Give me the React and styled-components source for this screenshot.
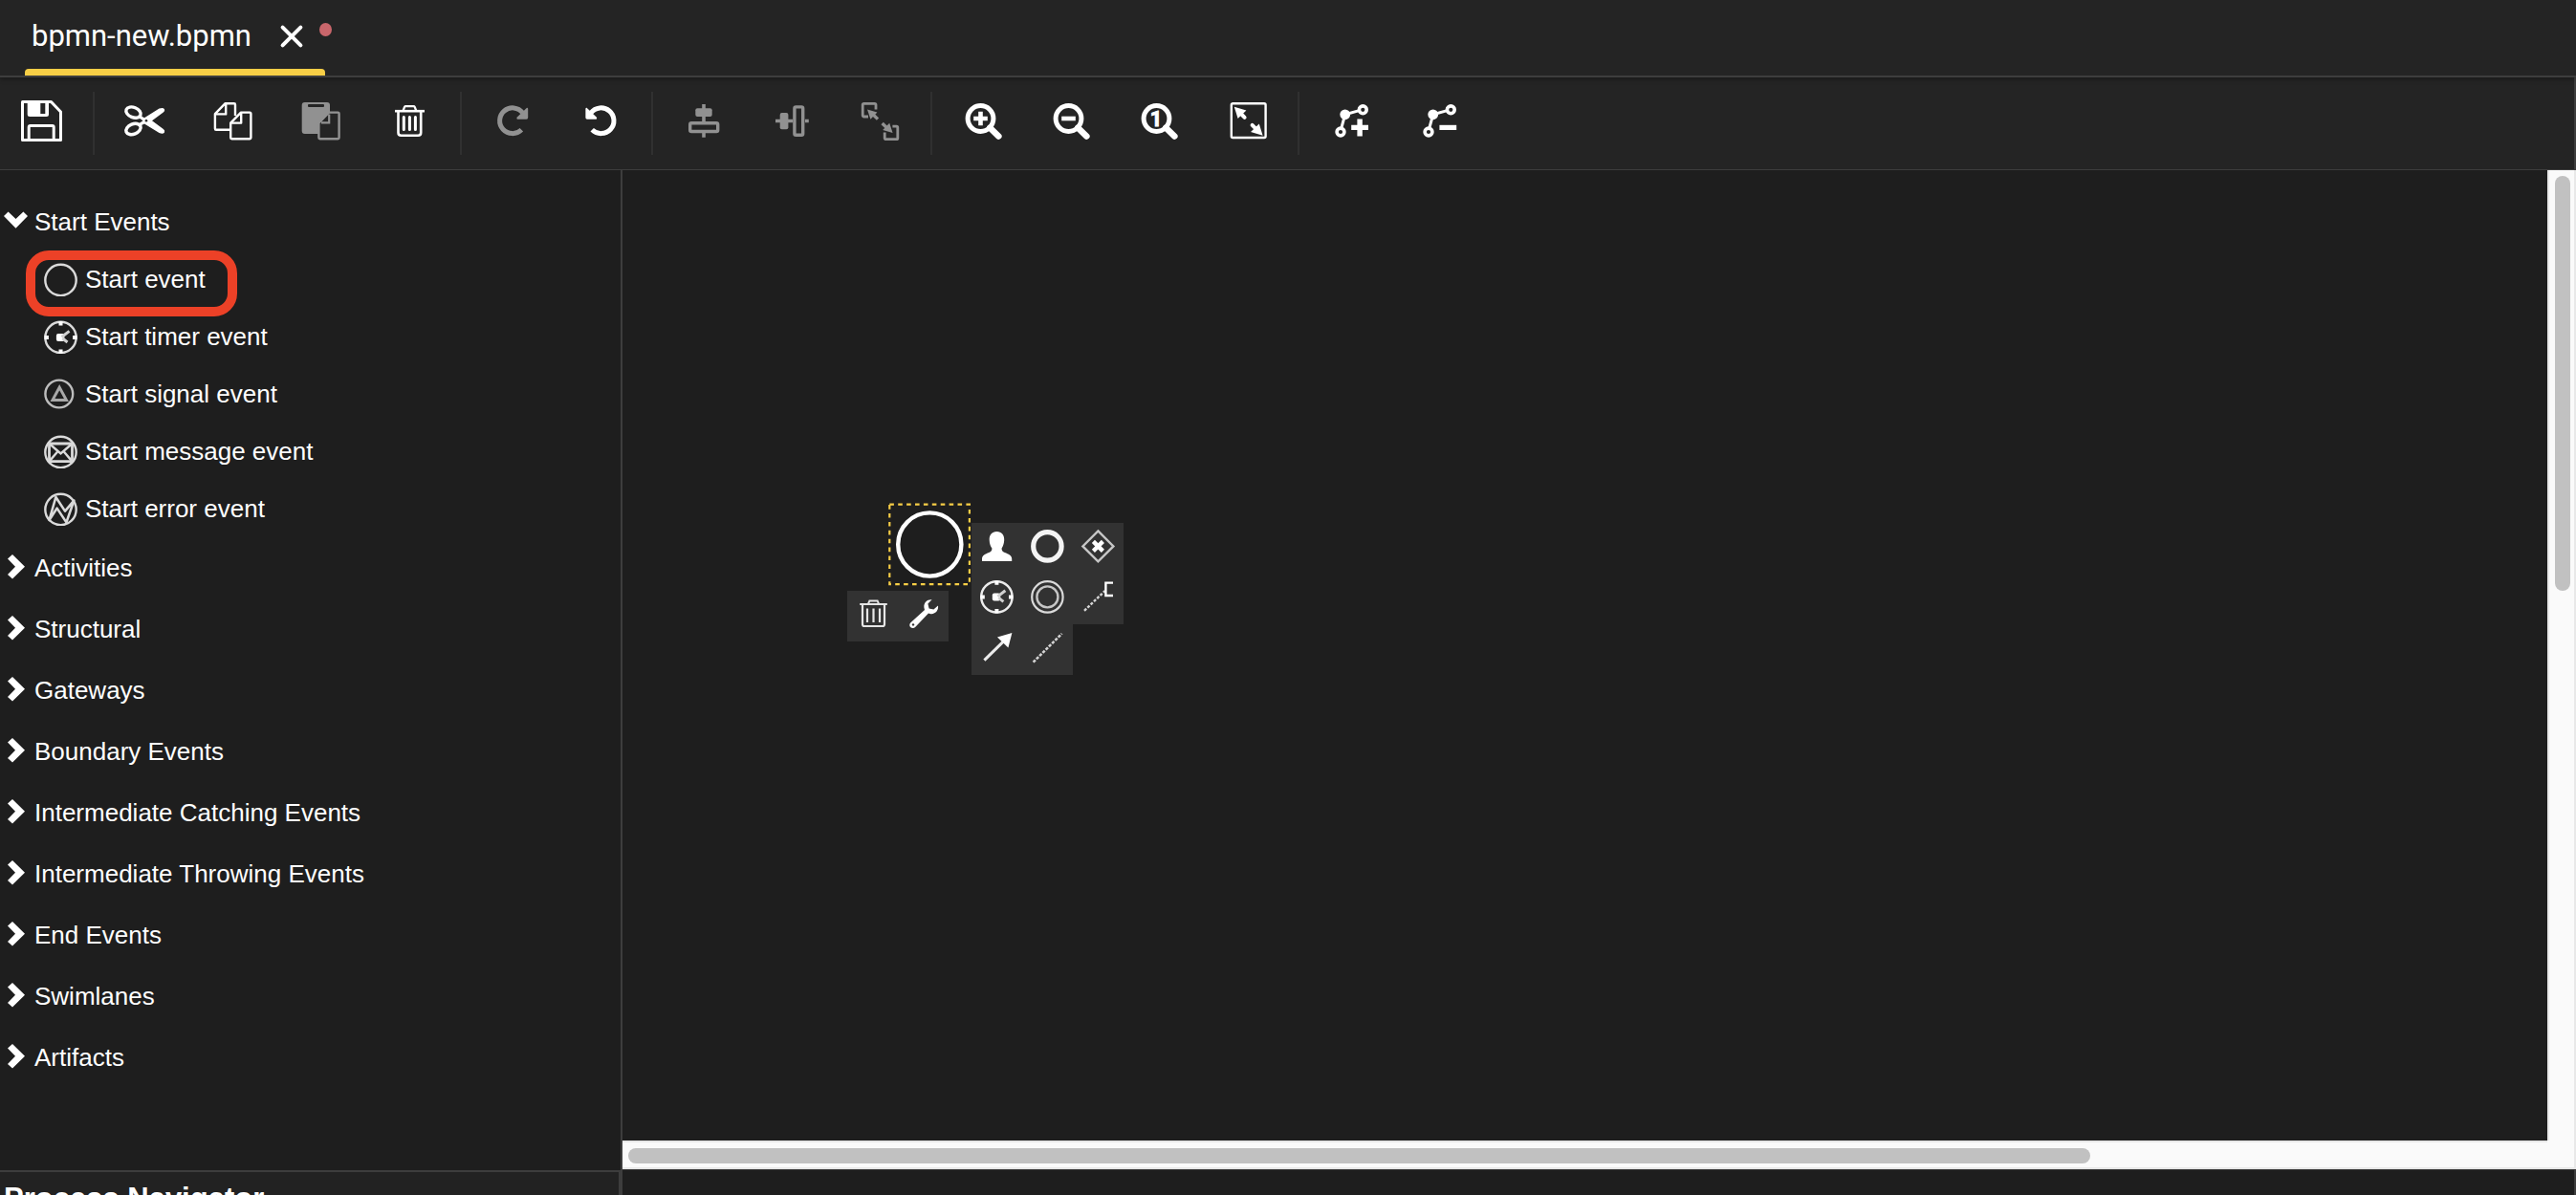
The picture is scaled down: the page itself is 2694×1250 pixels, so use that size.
import React, { useState } from "react";
import styled, { createGlobalStyle, css } from "styled-components";

const color = {
  bar: "#242424",
  surface: "#1e1e1e",
  line: "#3d3d3d",
  separator: "#303030",
  popup: "#323232",
  text: "#ffffff",
  disabled: "#919191",
  accent: "#f7ce46",
  dirty: "#c9666b",
  highlight: "#ec4127",
  track: "#fafafa",
  trackEdge: "#e8e8e8",
  thumb: "#c1c1c1",
};

const GlobalStyle = createGlobalStyle`
  *, *::before, *::after { box-sizing: border-box; }
  body {
    margin: 0;
    background: ${color.surface};
    color: ${color.text};
    font-family: "Liberation Sans", Arial, sans-serif;
    font-size: 26px;
    line-height: 30px;
  }
`;

const plainButton = css`
  border: 0;
  padding: 0;
  margin: 0;
  background: none;
  color: inherit;
  font: inherit;
  text-align: left;
  cursor: pointer;
`;

const Editor = styled.div`
  display: flex;
  flex-direction: column;
  height: 100vh;
  overflow: hidden;
`;

/* ---------- file tabs ---------- */

const TabBar = styled.header`
  position: relative;
  z-index: 1;
  display: flex;
  flex: 0 0 79px;
  padding-left: 26px;
  background: ${color.bar};
  border-bottom: 2px solid ${color.line};
  box-shadow: 0 2px 5px rgba(0, 0, 0, 0.3);
`;

const FileTab = styled.div`
  position: relative;
  display: flex;
  align-items: center;
  gap: 28px;
  height: 79px;
  padding: 0 21px 4px 7px;
  font-family: Roboto, sans-serif;
  font-size: 31px;
  line-height: 36px;

  &::after {
    content: "";
    position: absolute;
    left: 0;
    right: 0;
    bottom: 0;
    height: 7px;
    border-radius: 4px 4px 0 0;
    background: ${color.accent};
  }
`;

const CloseButton = styled.button`
  ${plainButton}
  display: flex;
`;

const DirtyDot = styled.span`
  position: absolute;
  top: 24px;
  right: -7px;
  width: 13px;
  height: 14px;
  border-radius: 50%;
  background: ${color.dirty};
`;

/* ---------- toolbar ---------- */

const Toolbar = styled.div`
  display: flex;
  align-items: center;
  flex: 0 0 97px;
  background: ${color.bar};
  border-bottom: 1px solid ${color.line};
  border-right: 2px solid ${color.line};
`;

const ToolGroup = styled.div`
  display: flex;
  align-items: center;
  height: 66px;
  padding: ${(p) => (p.$first ? "0 11px 0 0" : "0 7px")};

  & + & {
    border-left: 2px solid ${color.separator};
  }
`;

const ToolButton = styled.button`
  ${plainButton}
  display: flex;
  justify-content: center;
  width: ${(p) => (p.$narrow ? "86px" : "92px")};
  color: ${color.text};

  &:disabled {
    color: ${color.disabled};
    cursor: default;
  }
`;

/* ---------- body ---------- */

const Body = styled.div`
  display: flex;
  flex: 1;
  min-height: 0;
`;

const Sidebar = styled.aside`
  display: flex;
  flex-direction: column;
  flex: 0 0 651px;
  border-right: 2px solid ${color.line};
`;

const Palette = styled.nav`
  flex: 1;
  min-height: 0;
  padding-top: 23px;
`;

const GroupHeader = styled.button`
  ${plainButton}
  display: flex;
  align-items: center;
  width: 100%;
  height: ${(p) => (p.$open ? "61px" : "64px")};
`;

const Chevron = styled.svg`
  flex: none;
  width: 36px;
  height: 30px;
`;

const ItemList = styled.ul`
  margin: 0;
  padding: 0 0 0 45px;
  list-style: none;
`;

const Item = styled.li`
  position: relative;
  display: flex;
  height: 60px;
`;

const ItemButton = styled.button`
  ${plainButton}
  display: flex;
  align-items: center;
  gap: 8px;
`;

const Highlight = styled.span`
  position: absolute;
  left: -18px;
  top: 0;
  width: 221px;
  height: 69px;
  border: 10px solid ${color.highlight};
  border-radius: 24px;
  pointer-events: none;
`;

const Navigator = styled.section`
  flex: 0 0 26px;
  overflow: hidden;
  padding: 10px 4px 0;
  background: #222222;
  border-top: 2px solid ${color.line};
  border-right: 2px solid ${color.line};
`;

const NavigatorTitle = styled.h2`
  margin: 0;
  font-size: 31px;
  line-height: 36px;
  font-weight: 700;
`;

/* ---------- canvas ---------- */

const CanvasColumn = styled.main`
  display: flex;
  flex-direction: column;
  flex: 1;
  min-width: 0;
`;

const CanvasArea = styled.div`
  display: grid;
  grid-template-columns: 1fr 30px;
  grid-template-rows: 1fr 30px;
  flex: 1;
  background: ${color.track};
`;

const Canvas = styled.div`
  position: relative;
  overflow: hidden;
  background: ${color.surface};
`;

const VerticalTrack = styled.div`
  padding: 6px 4px 0 6px;
  background: ${color.track};
  border-left: 2px solid ${color.trackEdge};
  border-right: 2px solid ${color.trackEdge};
`;

const HorizontalTrack = styled.div`
  padding: 6px 0 0 6px;
  background: ${color.track};
  border-top: 2px solid ${color.trackEdge};
  border-bottom: 2px solid ${color.trackEdge};
`;

const Corner = styled.div`
  border-right: 2px solid ${color.trackEdge};
  border-bottom: 2px solid ${color.trackEdge};
`;

const Thumb = styled.div`
  width: ${(p) => (p.$vertical ? "16px" : "76.2%")};
  height: ${(p) => (p.$vertical ? "43%" : "16px")};
  border-radius: 8px;
  background: ${color.thumb};
`;

const StatusStrip = styled.footer`
  flex: 0 0 27px;
  border-top: 1px solid ${color.line};
  border-right: 2px solid ${color.line};
`;

const Shape = styled.svg`
  position: absolute;
  left: ${(p) => p.$x}px;
  top: ${(p) => p.$y}px;
`;

const ContextPad = styled.div`
  position: absolute;
  left: ${(p) => p.$x}px;
  top: ${(p) => p.$y}px;
`;

const PadRow = styled.div`
  display: flex;
`;

const PadButton = styled.button`
  ${plainButton}
  display: flex;
  width: 53px;
  height: 53px;
  background: ${color.popup};
`;

/* ---------- drawings ---------- */

const ToolIcon = ({ children }) => (
  <svg width="48" height="48" viewBox="0 0 48 48" fill="none" stroke="currentColor" aria-hidden="true">
    {children}
  </svg>
);

const solid = { fill: "currentColor", stroke: "none" };

const SaveIcon = () => (
  <ToolIcon>
    <path d="M4.5 1.5H34.5L44.5 12V41.5H4.5Z" strokeWidth="3" strokeLinejoin="round" />
    <path d="M9.7 1H32V14.5Q32 17 29.5 17H12.2Q9.7 17 9.7 14.5Z M23.3 3V14H28.3V3Z" fillRule="evenodd" {...solid} />
    <path d="M11.2 41V28Q11.2 26.5 12.7 26.5H35.7Q37.2 26.5 37.2 28V41" strokeWidth="3" />
  </ToolIcon>
);

const ScissorsIcon = () => (
  <ToolIcon>
    <ellipse cx="11.5" cy="12.6" rx="8" ry="5.2" transform="rotate(22 11.5 12.6)" strokeWidth="3.4" />
    <ellipse cx="11.5" cy="30" rx="8" ry="5.2" transform="rotate(-22 11.5 30)" strokeWidth="3.4" />
    <path d="M17 15L23 18.2L38.5 8.6Q42.5 7 44 9.2Q44.8 11.2 42.8 12.6L31 21.3L42.8 30Q44.8 31.4 44 33.4Q42.5 35.6 38.5 34L23 24.4L17 27.6L16 25L21.5 21.3L16 17.6Z" {...solid} />
    <circle cx="25" cy="21.3" r="1.3" fill={color.bar} stroke="none" />
  </ToolIcon>
);

const CopyIcon = () => (
  <ToolIcon>
    <g strokeWidth="2.4" strokeLinejoin="round">
      <path d="M21 30.8H6Q4.9 30.8 4.9 29.5V14.2L15.6 3.2H24.8Q26 3.2 26 4.4V16" />
      <path d="M5.5 14.4H16.2V3.6" />
      <path d="M32 12.6H41.2Q42.4 12.6 42.4 13.8V39Q42.4 40.2 41.2 40.2H22.4Q21.2 40.2 21.2 39V23.6Z" />
      <path d="M21.8 23.6H32.2V13" />
    </g>
  </ToolIcon>
);

const PasteIcon = () => (
  <ToolIcon>
    <rect x="3.7" y="2" width="29.3" height="33" rx="3" {...solid} />
    <rect x="10" y="4" width="17" height="3" rx="1" fill={color.bar} stroke="none" />
    <path
      d="M32 12.6H41.4Q42.6 12.6 42.6 13.8V39Q42.6 40.2 41.4 40.2H22.6Q21.4 40.2 21.4 39V23.6Z"
      fill={color.bar}
      strokeWidth="2.4"
      strokeLinejoin="round"
    />
    <path d="M24 23.4H32.2V14.5" strokeWidth="2.2" />
  </ToolIcon>
);

const TrashIcon = () => (
  <ToolIcon>
    <path d="M9 11.2H40" strokeWidth="2.6" />
    <path d="M17.5 11L19 7Q19.4 6.2 20.4 6.2H28.4Q29.4 6.2 29.8 7L31.3 11" strokeWidth="2.2" />
    <path d="M12.5 12V33.8Q12.5 36.8 15.5 36.8H33.2Q36.2 36.8 36.2 33.8V12" strokeWidth="2.6" />
    <path d="M18.3 17.5V30.5M24.4 17.5V30.5M30.4 17.5V30.5" strokeWidth="3" strokeLinecap="round" />
  </ToolIcon>
);

const TurnArrow = () => (
  <>
    <path d="M33.4 30.8A13.4 13.4 0 1 1 34.6 13" strokeWidth="5" />
    <path d="M39 7.7Q40.2 7.5 40.2 9V18Q40.2 19.8 38.6 19.8H29.2Q28 19.6 28.6 17.8Z" {...solid} />
  </>
);

const RedoIcon = () => (
  <ToolIcon>
    <TurnArrow />
  </ToolIcon>
);

const UndoIcon = () => (
  <ToolIcon>
    <g transform="translate(48.6 0) scale(-1 1)">
      <TurnArrow />
    </g>
  </ToolIcon>
);

const AlignVerticalIcon = () => (
  <ToolIcon>
    <path d="M24 4V22M24 34V38.7" strokeWidth="3.6" />
    <rect x="15.3" y="8.3" width="17.4" height="8.7" rx="2" {...solid} />
    <rect x="9.7" y="23.7" width="29" height="8.8" rx="1.5" strokeWidth="3.4" />
  </ToolIcon>
);

const AlignHorizontalIcon = () => (
  <ToolIcon>
    <path d="M7 21.5H25M38 21.5H41.8" strokeWidth="3.6" />
    <rect x="11.7" y="13" width="8.7" height="17.2" rx="2" {...solid} />
    <rect x="26.9" y="6.9" width="8.8" height="29.4" rx="1.5" strokeWidth="3.4" />
  </ToolIcon>
);

const SameSizeIcon = () => (
  <ToolIcon>
    <path d="M20 9.5V4.6Q20 3.4 18.8 3.4H7.4Q6.2 3.4 6.2 4.6V15.6Q6.2 17 7.6 17H12" strokeWidth="2.8" />
    <path d="M22 19.6L16 13.8" strokeWidth="3.4" />
    <path d="M11 9.6L21.4 12.6L14.4 19.8Z" {...solid} />
    <path d="M29.2 33.4V39.2Q29.2 40.6 30.6 40.6H41.6Q42.8 40.6 42.8 39.4V28.4Q42.8 27.2 41.6 27.2H37.4" strokeWidth="2.8" />
    <path d="M26.6 24L32.6 29.8" strokeWidth="3.4" />
    <path d="M37.6 34L27.2 31L34.2 23.8Z" {...solid} />
  </ToolIcon>
);

const Magnifier = ({ children }) => (
  <ToolIcon>
    <circle cx="21.5" cy="19" r="13.4" strokeWidth="5" />
    <path d="M31.2 28.6L40.4 37.6" strokeWidth="6.4" strokeLinecap="round" />
    {children}
  </ToolIcon>
);

const ZoomInIcon = () => (
  <Magnifier>
    <path d="M14.2 19H28.8M21.5 11.7V26.3" strokeWidth="4.6" />
  </Magnifier>
);

const ZoomOutIcon = () => (
  <Magnifier>
    <path d="M14.2 19H28.8" strokeWidth="4.6" />
  </Magnifier>
);

const ZoomText = styled.text`
  font: 700 22px Roboto, sans-serif;
  fill: currentColor;
  stroke: currentColor;
  stroke-width: 1px;
  text-anchor: middle;
`;

const ZoomActualIcon = () => (
  <Magnifier>
    <ZoomText x="21" y="27">1</ZoomText>
  </Magnifier>
);

const ZoomFitIcon = () => (
  <ToolIcon>
    <rect x="7.8" y="3.2" width="35.8" height="35.8" rx="1.5" strokeWidth="2.4" />
    <path d="M16 12L21.6 17.8M35.4 31.6L29.6 25.8" strokeWidth="4" strokeLinecap="round" />
    <path d="M10.8 6.8L23.4 10.6L14.6 19Z M40.6 36.8L28 33L36.8 24.6Z" {...solid} />
  </ToolIcon>
);

const Route = ({ children }) => (
  <ToolIcon>
    <path d="M33.5 10.6L18.7 14.8L14.8 29" strokeWidth="3" />
    <circle cx="18.7" cy="14.8" r="5.4" {...solid} />
    <circle cx="37.3" cy="9.8" r="3.9" strokeWidth="3.6" />
    <circle cx="14" cy="33" r="3.9" strokeWidth="3.6" />
    {children}
  </ToolIcon>
);

const AddBendIcon = () => (
  <Route>
    <path d="M25.2 28.4H43M34.1 19.4V37.4" strokeWidth="5.4" />
  </Route>
);

const RemoveBendIcon = () => (
  <Route>
    <path d="M25.4 28.4H43.2" strokeWidth="5.2" />
  </Route>
);

const EventIcon = ({ children, small }) => (
  <svg width="36" height="36" viewBox="0 0 36 36" fill="none" stroke="#dadada" strokeWidth="2.4" aria-hidden="true">
    {small ? <circle cx="16.8" cy="18" r="14.4" stroke="#bdbdbd" /> : <circle cx="18.5" cy="19" r="16.2" />}
    {children}
  </svg>
);

const TimerMarks = ({ cx, cy }) => (
  <g transform={`translate(${cx} ${cy})`}>
    <path d="M0 -17V-12.6M0 17V12.6M-17 0H-12.6M17 0H12.6" stroke="#fff" strokeWidth="4" />
    <rect x="-4.6" y="-4" width="8.4" height="8" rx="2" fill="#fff" stroke="none" />
    <path d="M1 -0.5L9 -6.6M2 1L7 5" stroke="#d0d0d0" strokeWidth="3" />
  </g>
);

const StartIcon = () => <EventIcon />;
const StartTimerIcon = () => (
  <EventIcon>
    <TimerMarks cx={18.5} cy={19} />
  </EventIcon>
);
const StartSignalIcon = () => (
  <EventIcon small>
    <path d="M17.2 11.2L24.4 24.4H10Z" stroke="#a8a8a8" strokeWidth="3" />
  </EventIcon>
);
const StartMessageIcon = () => (
  <EventIcon>
    <path d="M6.5 10H30.5V28.6H6.5Z" strokeWidth="2.8" />
    <path d="M6.5 10L18.5 20.4L30.5 10M6.5 28.6L15.6 18M30.5 28.6L21.4 18" />
  </EventIcon>
);
const StartErrorIcon = () => (
  <EventIcon>
    <path d="M6.5 30L13.4 6L23 20.6L32.4 9.6L24.4 32.4L14.6 17.6Z" strokeWidth="2.6" strokeLinejoin="round" />
  </EventIcon>
);

const PadIcon = ({ children }) => (
  <svg width="53" height="53" viewBox="0 0 53 53" fill="none" stroke="#ffffff" aria-hidden="true">
    {children}
  </svg>
);

const UserTaskIcon = () => (
  <PadIcon>
    <path
      d="M26.4 9C31.5 9 34.4 12.6 34.2 18C34 22 32.8 24.6 31.6 26.4C31.4 28.6 32.4 30 34.8 31C38.6 32.6 42.2 34 42.2 37.4V40H11V37.4C11 34 14.4 32.6 18.2 31C20.6 30 21.6 28.6 21.4 26.4C20 24.6 18.8 22 18.7 18C18.5 12.6 21.4 9 26.4 9Z"
      fill="#fff"
      stroke="none"
    />
  </PadIcon>
);
const EndEventIcon = () => (
  <PadIcon>
    <circle cx="26.4" cy="24.4" r="14.7" strokeWidth="5.2" stroke="#f4f4f4" />
  </PadIcon>
);
const GatewayIcon = () => (
  <PadIcon>
    <path d="M26.4 8.4L42.4 24.4L26.4 40.4L10.4 24.4Z" stroke="#c6c6c6" strokeWidth="2.4" />
    <path d="M21.4 19.4L31.4 29.4M31.4 19.4L21.4 29.4" strokeWidth="4.4" />
  </PadIcon>
);
const PadTimerIcon = () => (
  <PadIcon>
    <circle cx="26.4" cy="24.4" r="16.2" stroke="#ececec" strokeWidth="2.4" />
    <TimerMarks cx={26.4} cy={24.4} />
  </PadIcon>
);
const IntermediateIcon = () => (
  <PadIcon>
    <circle cx="26.4" cy="24.4" r="16.2" stroke="#dadada" strokeWidth="2.2" />
    <circle cx="26.4" cy="24.4" r="11" stroke="#c6c6c6" strokeWidth="2.4" />
  </PadIcon>
);
const AnnotationIcon = () => (
  <PadIcon>
    <path d="M12 38.8L33.6 18" stroke="#d4d4d4" strokeWidth="2.4" strokeDasharray="3 1.6" />
    <path d="M42 9.6H34.4V23H42" strokeWidth="2.4" />
  </PadIcon>
);
const SequenceFlowIcon = () => (
  <PadIcon>
    <path d="M13.4 37.6L33 18.4" stroke="#ececec" strokeWidth="3" />
    <path d="M42.4 9L27 13.4L38.4 24.4Z" fill="#fff" stroke="none" />
  </PadIcon>
);
const AssociationIcon = () => (
  <PadIcon>
    <path d="M11.6 39.6L41.6 9.8" stroke="#d4d4d4" strokeWidth="2.6" strokeDasharray="3.2 1.4" />
  </PadIcon>
);
const DeleteIcon = () => (
  <PadIcon>
    <g stroke="#e6e6e6">
      <path d="M13.2 14H41.8" strokeWidth="2" />
      <path d="M22 13.6L23.4 10.4H31.6L33 13.6" strokeWidth="2" />
      <path d="M16 15V35Q16 37 18 37H37Q39 37 39 35V15" strokeWidth="2.2" />
      <path d="M21 18.4V33M27.5 18.4V33M34 18.4V33" strokeWidth="2.2" />
    </g>
  </PadIcon>
);
const WrenchIcon = () => (
  <PadIcon>
    <path
      d="M35.6 9.2C31 8.6 26.8 12.2 27.4 17.4L28 20L13.4 33.2C11.8 34.8 12 37 13.4 38.2C14.8 39.4 17 39.2 18.4 37.8L32 23.6L34.4 24.2C39.6 24.6 42.8 20 42 15.6L37.4 19.6L32.6 18.4L31.4 13.6Z"
      fill="#fff"
      stroke="none"
    />
    <circle cx="16" cy="35.4" r="1.2" fill={color.popup} stroke="none" />
  </PadIcon>
);

/* ---------- data ---------- */

const toolGroups = [
  [{ label: "Save", Icon: SaveIcon }],
  [
    { label: "Cut", Icon: ScissorsIcon },
    { label: "Copy", Icon: CopyIcon },
    { label: "Paste", Icon: PasteIcon, disabled: true },
    { label: "Delete", Icon: TrashIcon },
  ],
  [
    { label: "Redo", Icon: RedoIcon, disabled: true },
    { label: "Undo", Icon: UndoIcon },
  ],
  [
    { label: "Align vertical", Icon: AlignVerticalIcon, disabled: true },
    { label: "Align horizontal", Icon: AlignHorizontalIcon, disabled: true },
    { label: "Same size", Icon: SameSizeIcon, disabled: true },
  ],
  [
    { label: "Zoom in", Icon: ZoomInIcon },
    { label: "Zoom out", Icon: ZoomOutIcon },
    { label: "Zoom to actual size", Icon: ZoomActualIcon },
    { label: "Zoom to fit", Icon: ZoomFitIcon },
  ],
  [
    { label: "Add bend point", Icon: AddBendIcon },
    { label: "Remove bend point", Icon: RemoveBendIcon },
  ],
];

const paletteGroups = [
  {
    name: "Start Events",
    items: [
      { name: "Start event", Icon: StartIcon, highlighted: true },
      { name: "Start timer event", Icon: StartTimerIcon },
      { name: "Start signal event", Icon: StartSignalIcon },
      { name: "Start message event", Icon: StartMessageIcon },
      { name: "Start error event", Icon: StartErrorIcon },
    ],
  },
  { name: "Activities", items: [] },
  { name: "Structural", items: [] },
  { name: "Gateways", items: [] },
  { name: "Boundary Events", items: [] },
  { name: "Intermediate Catching Events", items: [] },
  { name: "Intermediate Throwing Events", items: [] },
  { name: "End Events", items: [] },
  { name: "Swimlanes", items: [] },
  { name: "Artifacts", items: [] },
];

const appendRows = [
  [
    ["Append user task", UserTaskIcon],
    ["Append end event", EndEventIcon],
    ["Append gateway", GatewayIcon],
  ],
  [
    ["Append timer event", PadTimerIcon],
    ["Append intermediate event", IntermediateIcon],
    ["Append annotation", AnnotationIcon],
  ],
  [
    ["Sequence flow", SequenceFlowIcon],
    ["Association", AssociationIcon],
  ],
];

const editRows = [
  [
    ["Delete element", DeleteIcon],
    ["Change type", WrenchIcon],
  ],
];

function Pad({ x, y, rows }) {
  return (
    <ContextPad $x={x} $y={y}>
      {rows.map((row, index) => (
        <PadRow key={index}>
          {row.map(([label, Icon]) => (
            <PadButton key={label} type="button" aria-label={label}>
              <Icon />
            </PadButton>
          ))}
        </PadRow>
      ))}
    </ContextPad>
  );
}

function PaletteGroup({ group, open, onToggle }) {
  return (
    <div>
      <GroupHeader type="button" $open={open} aria-expanded={open} onClick={onToggle}>
        <Chevron viewBox="0 0 36 30" fill="#fff" aria-hidden="true">
          {open ? (
            <path d="M4 9L8.6 4.6L16.5 12L24.4 4.6L29 9L16.5 21.8Z" />
          ) : (
            <path d="M8 5.6L13 1L26 13.8L13 26.6L8 22L16 13.8Z" />
          )}
        </Chevron>
        {group.name}
      </GroupHeader>
      {open && (
        <ItemList>
          {group.items.map(({ name, Icon, highlighted }) => (
            <Item key={name}>
              <ItemButton type="button">
                <Icon />
                {name}
              </ItemButton>
              {highlighted && <Highlight />}
            </Item>
          ))}
        </ItemList>
      )}
    </div>
  );
}

export default function App() {
  const [openGroup, setOpenGroup] = useState("Start Events");

  return (
    <Editor>
      <GlobalStyle />
      <TabBar>
        <FileTab>
          <span>bpmn-new.bpmn</span>
          <CloseButton type="button" aria-label="Close file">
            <svg width="28" height="28" viewBox="0 0 28 28" fill="none" stroke="#fff" strokeWidth="4" strokeLinecap="round">
              <path d="M4.6 4.6L23.4 23.4M23.4 4.6L4.6 23.4" />
            </svg>
          </CloseButton>
          <DirtyDot />
        </FileTab>
      </TabBar>

      <Toolbar role="toolbar">
        {toolGroups.map((tools, index) => (
          <ToolGroup key={index} $first={index === 0}>
            {tools.map(({ label, Icon, disabled }) => (
              <ToolButton key={label} type="button" aria-label={label} disabled={disabled} $narrow={index === 0}>
                <Icon />
              </ToolButton>
            ))}
          </ToolGroup>
        ))}
      </Toolbar>

      <Body>
        <Sidebar>
          <Palette>
            {paletteGroups.map((group) => (
              <PaletteGroup
                key={group.name}
                group={group}
                open={openGroup === group.name}
                onToggle={() => setOpenGroup(openGroup === group.name ? null : group.name)}
              />
            ))}
          </Palette>
          <Navigator>
            <NavigatorTitle>Process Navigator</NavigatorTitle>
          </Navigator>
        </Sidebar>

        <CanvasColumn>
          <CanvasArea>
            <Canvas>
              <Shape $x={276} $y={346} width="90" height="90" viewBox="0 0 90 90" fill="none">
                <rect x="3.3" y="3.6" width="83.6" height="83.6" stroke={color.accent} strokeWidth="2.2" strokeDasharray="4.6 4.3" />
                <circle cx="45.3" cy="45.5" r="33.1" stroke="#fff" strokeWidth="4.4" />
              </Shape>
              <Pad x={235} y={440} rows={editRows} />
              <Pad x={365} y={369} rows={appendRows} />
            </Canvas>
            <VerticalTrack>
              <Thumb $vertical />
            </VerticalTrack>
            <HorizontalTrack>
              <Thumb />
            </HorizontalTrack>
            <Corner />
          </CanvasArea>
          <StatusStrip />
        </CanvasColumn>
      </Body>
    </Editor>
  );
}
